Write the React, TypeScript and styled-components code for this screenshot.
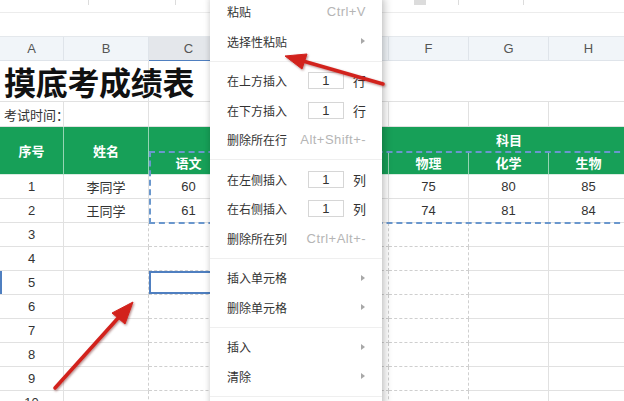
import React from "react";
import styled, { createGlobalStyle, css } from "styled-components";

const FONT = `"Liberation Sans", "Noto Sans CJK SC", sans-serif`;

const Global = createGlobalStyle`
  html, body { margin: 0; padding: 0; background: #fff; }
  body { width: 624px; height: 401px; overflow: hidden; font-family: ${FONT}; }
  * { box-sizing: border-box; }
`;

const Page = styled.div`
  position: relative;
  width: 624px;
  height: 401px;
  overflow: hidden;
  background: #fff;
`;

const TopStrip = styled.div`
  height: 13px;
  border-bottom: 1px solid #ececec;
  display: flex;
  align-items: flex-start;
  padding-left: 88px;
`;

const Tick = styled.span<{ $gap: number; $w?: number }>`
  display: block;
  margin-right: ${(p) => p.$gap}px;
  width: ${(p) => p.$w ?? 1}px;
  height: 5px;
  background: #dcdcdc;
`;

const FormulaBar = styled.div`
  height: 24px;
  border-bottom: 1px solid #e4e8ec;
`;

const Sheet = styled.div`
  display: grid;
  grid-template-columns: 64px 85px repeat(9, 80px);
  grid-template-rows: 24px 41px 25px 24px 24px repeat(10, 24px);
  width: max-content;
  font-family: ${FONT};
`;

const ColHead = styled.div<{ $active?: boolean }>`
  display: flex;
  align-items: center;
  justify-content: center;
  font-size: 13px;
  color: #555;
  background: ${(p) => (p.$active ? "#e4e7eb" : "#f1f5f9")};
  border-right: 1px solid #dfe4ea;
  border-bottom: ${(p) => (p.$active ? "1px solid #4f7fc0" : "1px solid #dfe4ea")};
`;

const TitleCell = styled.div<{ $span: number; $right?: boolean }>`
  grid-column: span ${(p) => p.$span};
  display: flex;
  align-items: center;
  padding-left: 4px;
  white-space: nowrap;
  overflow: visible;
  font-size: 32px;
  font-weight: 700;
  color: #111;
  letter-spacing: -0.3px;
  border-bottom: 1px solid #e1e1e1;
  border-right: ${(p) => (p.$right ? "1px solid #e1e1e1" : "none")};
`;

const NoteCell = styled.div`
  display: flex;
  align-items: center;
  padding-left: 4px;
  white-space: nowrap;
  overflow: visible;
  font-size: 13px;
  color: #333;
  border-right: 1px solid #e1e1e1;
  border-bottom: 1px solid #e1e1e1;
`;

const HeadCell = styled.div<{ $span?: number; $rows?: number; $line?: boolean; $bottom?: boolean }>`
  grid-column: span ${(p) => p.$span ?? 1};
  grid-row: span ${(p) => p.$rows ?? 1};
  display: flex;
  align-items: center;
  justify-content: center;
  background: #17a058;
  color: #fff;
  font-size: 13px;
  font-weight: 700;
  white-space: nowrap;
  border-right: ${(p) => (p.$line ? "1px solid rgba(255,255,255,0.55)" : "none")};
  border-bottom: ${(p) => (p.$bottom ? "1px solid #d9ece1" : "none")};
`;

const DataCell = styled.div<{ $dashR?: boolean; $dashB?: boolean; $selected?: boolean; $rowMark?: boolean }>`
  display: flex;
  align-items: center;
  justify-content: center;
  font-size: 13px;
  color: #333;
  white-space: nowrap;
  border-right: 1px ${(p) => (p.$dashR ? "dashed #cfcfcf" : "solid #e1e1e1")};
  border-bottom: 1px ${(p) => (p.$dashB ? "dashed #cfcfcf" : "solid #e1e1e1")};
  ${(p) =>
    p.$selected &&
    css`
      box-shadow: inset 0 0 0 2px #4f7fc0;
    `}
  ${(p) =>
    p.$rowMark &&
    css`
      box-shadow: inset 2px 0 0 #4f7fc0;
    `}
`;

const Marquee = styled.div`
  position: absolute;
  left: 149px;
  top: 151px;
  right: -6px;
  height: 73px;
  border: 2px dashed #6a97cd;
  pointer-events: none;
`;

const Menu = styled.div`
  position: absolute;
  left: 210px;
  top: -3px;
  width: 172px;
  padding-bottom: 30px;
  background: #fff;
  box-shadow: 3px 1px 8px rgba(0, 0, 0, 0.2), -1px 0 6px rgba(0, 0, 0, 0.1);
  z-index: 5;
  font-family: ${FONT};
`;

const MenuItem = styled.div`
  height: 29.5px;
  display: flex;
  align-items: center;
  justify-content: space-between;
  padding: 0 16px 0 17px;
  font-size: 12px;
  color: #333;
`;

const Separator = styled.div`
  height: 1px;
  margin: 4.5px 0;
  background: #efefef;
`;

const Shortcut = styled.span`
  font-size: 13px;
  color: #b5b5b5;
  letter-spacing: 0.45px;
`;

const SubArrow = styled.span`
  width: 0;
  height: 0;
  margin-right: 1px;
  border-left: 4px solid #a8a8a8;
  border-top: 3.5px solid transparent;
  border-bottom: 3.5px solid transparent;
`;

const InputGroup = styled.span`
  display: flex;
  align-items: center;
  gap: 9px;
`;

const NumBox = styled.span`
  width: 36px;
  height: 17px;
  border: 1px solid #d6d6d6;
  display: flex;
  align-items: center;
  justify-content: center;
  font-size: 13px;
  color: #333;
`;

const Unit = styled.span`
  font-size: 13px;
  color: #333;
`;

const ArrowLayer = styled.svg`
  position: absolute;
  left: 0;
  top: 0;
  z-index: 10;
  pointer-events: none;
`;

const cols = ["A", "B", "C", "D", "E", "F", "G", "H", "I", "J", "K"];
const subjects = ["语文", "数学", "英语", "物理", "化学", "生物", "政治", "历史", "地理"];
const students = [
  { no: 1, name: "李同学", scores: [60, 70, 65, 75, 80, 85, 78, 82, 88] },
  { no: 2, name: "王同学", scores: [61, 71, 66, 74, 81, 84, 77, 83, 87] },
];

type Entry =
  | { kind: "item"; label: string; shortcut?: string; sub?: boolean }
  | { kind: "input"; label: string; unit: string }
  | { kind: "sep" };

const menu: Entry[] = [
  { kind: "item", label: "粘贴", shortcut: "Ctrl+V" },
  { kind: "item", label: "选择性粘贴", sub: true },
  { kind: "sep" },
  { kind: "input", label: "在上方插入", unit: "行" },
  { kind: "input", label: "在下方插入", unit: "行" },
  { kind: "item", label: "删除所在行", shortcut: "Alt+Shift+-" },
  { kind: "sep" },
  { kind: "input", label: "在左侧插入", unit: "列" },
  { kind: "input", label: "在右侧插入", unit: "列" },
  { kind: "item", label: "删除所在列", shortcut: "Ctrl+Alt+-" },
  { kind: "sep" },
  { kind: "item", label: "插入单元格", sub: true },
  { kind: "item", label: "删除单元格", sub: true },
  { kind: "sep" },
  { kind: "item", label: "插入", sub: true },
  { kind: "item", label: "清除", sub: true },
  { kind: "sep" },
];

export default function App() {
  return (
    <Page>
      <Global />
      <TopStrip>
        <Tick $gap={86} />
        <Tick $gap={238} />
        <Tick $gap={32} $w={12} />
        <Tick $gap={64} />
        <Tick $gap={0} />
      </TopStrip>
      <FormulaBar />
      <Sheet>
        {cols.map((c) => (
          <ColHead key={c} $active={c === "C"}>
            {c}
          </ColHead>
        ))}

        <TitleCell $span={2} $right>
          摸底考成绩表
        </TitleCell>
        <TitleCell $span={9} />

        {cols.map((c) => (
          <NoteCell key={"n" + c}>{c === "A" ? "考试时间：" : ""}</NoteCell>
        ))}

        <HeadCell $rows={2} $line $bottom>
          序号
        </HeadCell>
        <HeadCell $rows={2} $line $bottom>
          姓名
        </HeadCell>
        <HeadCell $span={9}>科目</HeadCell>
        {subjects.map((s) => (
          <HeadCell key={s} $line $bottom>
            {s}
          </HeadCell>
        ))}

        {students.map((st) => (
          <React.Fragment key={st.no}>
            <DataCell>{st.no}</DataCell>
            <DataCell>{st.name}</DataCell>
            {st.scores.map((v, i) => (
              <DataCell key={i}>{v}</DataCell>
            ))}
          </React.Fragment>
        ))}

        {[3, 4, 5, 6, 7, 8, 9, 10].map((n) => (
          <React.Fragment key={n}>
            <DataCell $rowMark={n === 5}>{n}</DataCell>
            <DataCell $dashR />
            {subjects.map((s, i) => (
              <DataCell
                key={s}
                $dashR={i < 4}
                $dashB={i < 4}
                $selected={n === 5 && i === 0}
              />
            ))}
          </React.Fragment>
        ))}
      </Sheet>

      <Marquee />

      <Menu>
        {menu.map((e, i) => {
          if (e.kind === "sep") return <Separator key={i} />;
          if (e.kind === "input")
            return (
              <MenuItem key={i}>
                <span>{e.label}</span>
                <InputGroup>
                  <NumBox>1</NumBox>
                  <Unit>{e.unit}</Unit>
                </InputGroup>
              </MenuItem>
            );
          return (
            <MenuItem key={i}>
              <span>{e.label}</span>
              {e.shortcut ? <Shortcut>{e.shortcut}</Shortcut> : e.sub ? <SubArrow /> : null}
            </MenuItem>
          );
        })}
      </Menu>

      <ArrowLayer width={624} height={401} viewBox="0 0 624 401">
        <defs>
          <filter id="ash" x="-20%" y="-20%" width="140%" height="140%">
            <feDropShadow dx="1" dy="1.2" stdDeviation="0.9" floodColor="#5a0000" floodOpacity="0.45" />
          </filter>
        </defs>
        <g filter="url(#ash)" fill="#d2231f" stroke="#d2231f">
          <line x1={383} y1={84} x2={303} y2={61} strokeWidth={3.6} strokeLinecap="round" />
          <polygon points="285,56 307,54 302,69" strokeWidth={1} strokeLinejoin="round" />
          <line x1={55} y1={388} x2={119} y2={317} strokeWidth={3.6} strokeLinecap="round" />
          <polygon points="133,302 125,324 112,313" strokeWidth={1} strokeLinejoin="round" />
        </g>
      </ArrowLayer>
    </Page>
  );
}
